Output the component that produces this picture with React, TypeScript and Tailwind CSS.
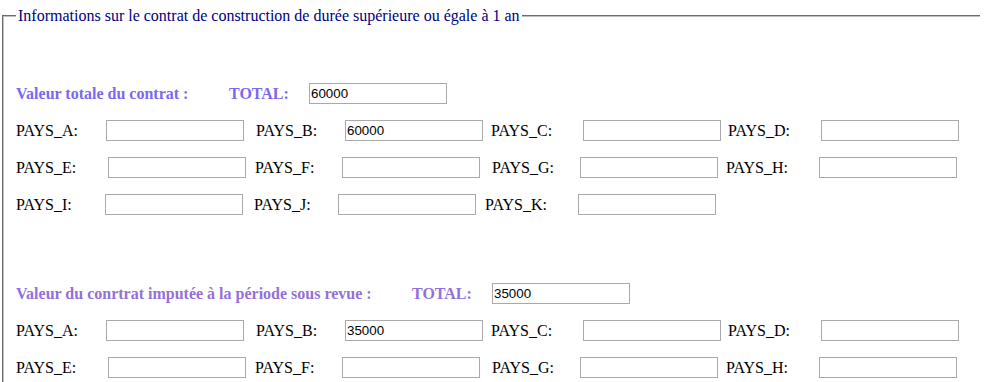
import React from "react";

const serif = "font-['Liberation_Serif','Times_New_Roman',serif]";

function Field({ value = "" }: { value?: string }) {
  return (
    <input
      type="text"
      defaultValue={value}
      className="h-[21px] w-[138px] shrink-0 border border-[#a9a9a9] bg-white px-[1px] font-['Liberation_Sans',Arial,sans-serif] text-[13.333px] font-normal text-black outline-none"
    />
  );
}

function Cell({
  label,
  ml,
  lw,
  value,
}: {
  label: string;
  ml: string;
  lw: string;
  value?: string;
}) {
  return (
    <div className={`flex items-center ${ml}`}>
      <span className={`shrink-0 ${lw}`}>{label}:</span>
      <Field value={value} />
    </div>
  );
}

function Heading({
  text,
  color,
  lw,
  value,
}: {
  text: string;
  color: string;
  lw: string;
  value: string;
}) {
  return (
    <div className="flex h-[21px] items-center">
      <span className={`shrink-0 font-bold ${color} ${lw}`}>{text}</span>
      <span className={`w-[80px] shrink-0 font-bold ${color}`}>TOTAL:</span>
      <Field value={value} />
    </div>
  );
}

function Row1({ b }: { b: string }) {
  return (
    <div className="flex h-[21px] items-center">
      <Cell label="PAYS_A" ml="ml-0" lw="w-[90px]" />
      <Cell label="PAYS_B" ml="ml-[12px]" lw="w-[89px]" value={b} />
      <Cell label="PAYS_C" ml="ml-[8px]" lw="w-[92px]" />
      <Cell label="PAYS_D" ml="ml-[7px]" lw="w-[93px]" />
    </div>
  );
}

function Row2() {
  return (
    <div className="flex h-[21px] items-center">
      <Cell label="PAYS_E" ml="ml-0" lw="w-[92px]" />
      <Cell label="PAYS_F" ml="ml-[9px]" lw="w-[87px]" />
      <Cell label="PAYS_G" ml="ml-[12px]" lw="w-[88px]" />
      <Cell label="PAYS_H" ml="ml-[8px]" lw="w-[93px]" />
    </div>
  );
}

function Row3() {
  return (
    <div className="flex h-[21px] items-center">
      <Cell label="PAYS_I" ml="ml-0" lw="w-[89px]" />
      <Cell label="PAYS_J" ml="ml-[11px]" lw="w-[84px]" />
      <Cell label="PAYS_K" ml="ml-[9px]" lw="w-[93px]" />
    </div>
  );
}

export default function App() {
  return (
    <div
      className={`h-[382px] w-[1007px] overflow-hidden bg-white pt-[7px] ${serif} text-[16px] leading-[18px] text-black`}
    >
      <div className="ml-[2px] flex h-[18px] w-[978px]">
        <div className="h-[10px] w-[14px] self-end border-l-2 border-t-2 border-[#c0c0c0] [border-style:groove]" />
        <span className="px-[2px] text-[#000080]">
          Informations sur le contrat de construction de durée supérieure ou égale à 1 an
        </span>
        <div className="h-[10px] flex-1 self-end border-t-2 border-[#c0c0c0] [border-style:groove]" />
      </div>
      <div className="ml-[2px] h-[400px] border-l-2 border-[#c0c0c0] pl-[12px] [border-style:groove]">
        <div className="flex flex-col gap-[16px] pt-[58px]">
          <Heading
            text="Valeur totale du contrat :"
            color="text-[#7b68ee]"
            lw="w-[213px]"
            value="60000"
          />
          <Row1 b="60000" />
          <Row2 />
          <Row3 />
        </div>
        <div className="mt-[68px] flex flex-col gap-[16px]">
          <Heading
            text="Valeur du conrtrat imputée à la période sous revue :"
            color="text-[#9370db]"
            lw="w-[396px]"
            value="35000"
          />
          <Row1 b="35000" />
          <Row2 />
        </div>
      </div>
    </div>
  );
}
